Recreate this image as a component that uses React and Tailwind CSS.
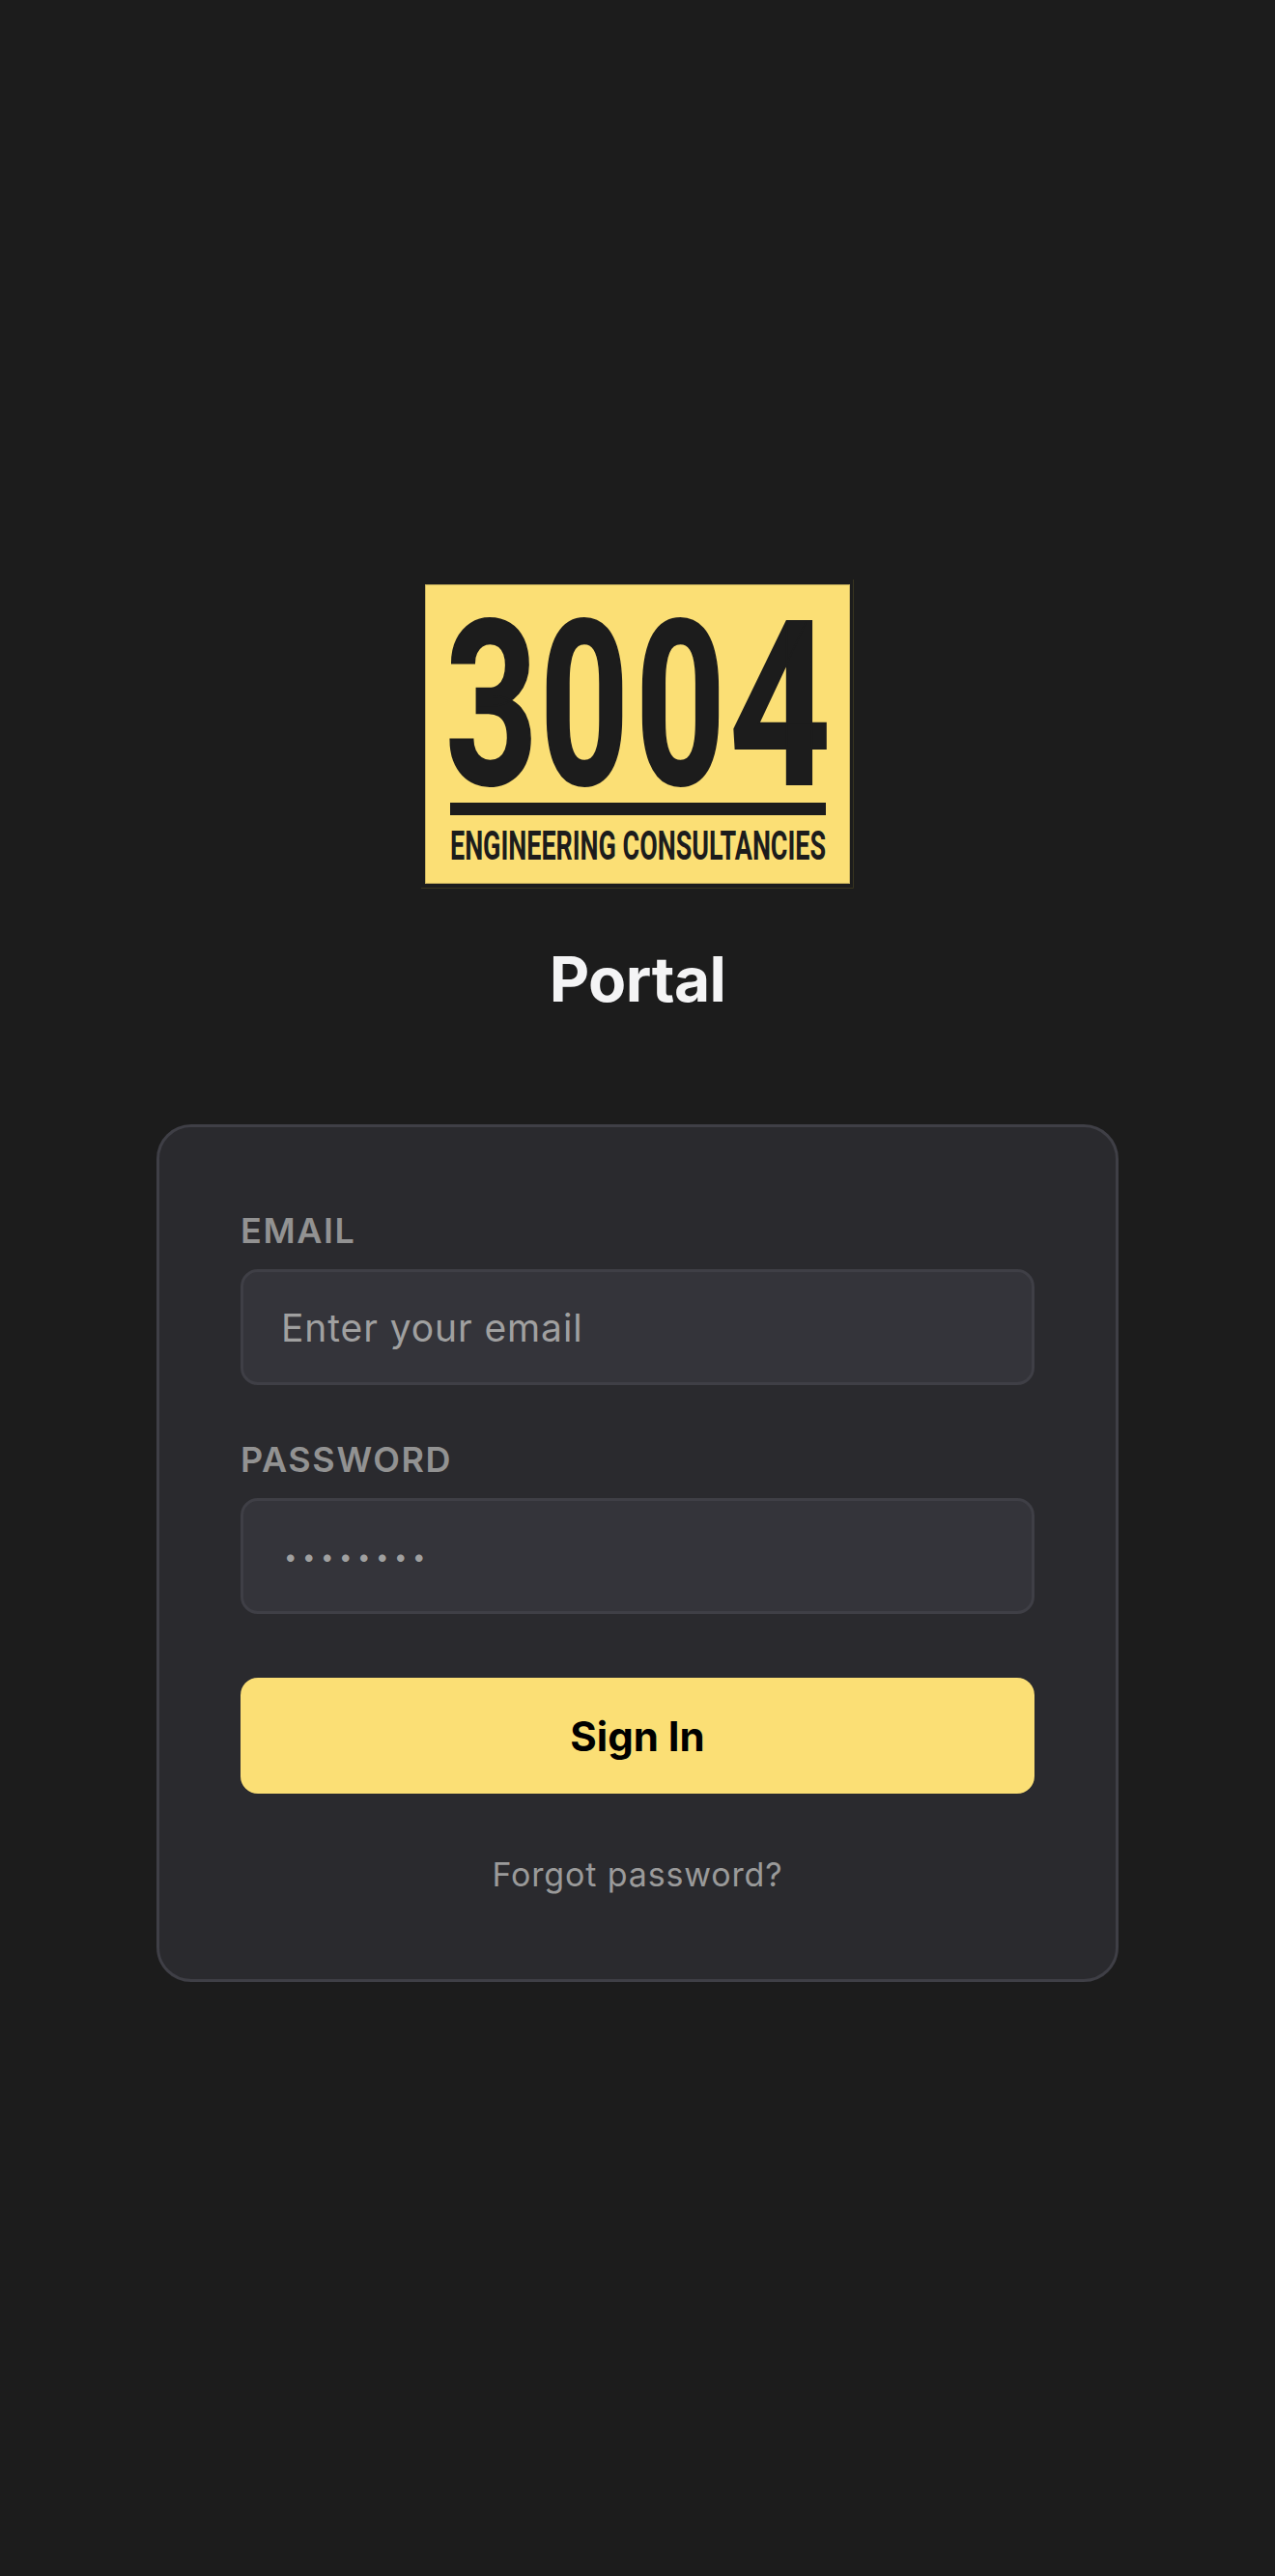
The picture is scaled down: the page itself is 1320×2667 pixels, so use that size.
const digits = [
  { ch: '3', x: 461, w: 96 },
  { ch: '0', x: 559, w: 92 },
  { ch: '0', x: 658, w: 93 },
  { ch: '4', x: 755, w: 105 },
];

const logoFont = "'Liberation Sans Narrow', Roboto, sans-serif";

const Logo = () => (
  <svg width="448" height="320" viewBox="436 600 448 320" className="block">
    <path d="M883.5 600V919.5H436" fill="none" stroke="#37341f" />
    <rect x="440.5" y="605.5" width="439" height="309" fill="#fbdf75" stroke="#c9b35f" />
    {digits.map((d, i) => (
      <text key={i} x={d.x} y="812" textLength={d.w} lengthAdjust="spacingAndGlyphs" fontFamily={logoFont} fontWeight="700" fontSize="238" fill="#1c1c1c" stroke="#1c1c1c" strokeWidth="2">
        {d.ch}
      </text>
    ))}
    <rect x="466" y="831" width="389" height="13" fill="#1c1c1c" />
    <text x="466" y="890" textLength="389" lengthAdjust="spacingAndGlyphs" fontFamily={logoFont} fontWeight="700" fontSize="42" fill="#1c1c1c">
      ENGINEERING CONSULTANCIES
    </text>
  </svg>
);

const Field = ({ label, type, placeholder, dots }) => (
  <div>
    <label className="block text-[36px] leading-[44px] font-semibold tracking-[1.6px] text-[#929292] mb-[18px]">{label}</label>
    <input
      type={type}
      placeholder={placeholder}
      className={`block w-full h-[120px] bg-[#34343a] border-[3px] border-[#3f3f46] rounded-[18px] outline-none placeholder:text-[#a0a0a0] ${dots ? 'px-[42px] text-[24px] tracking-[5.5px]' : 'px-[39px] text-[39px] tracking-[0.9px]'}`}
    />
  </div>
);

export default function App() {
  return (
    <div className="min-h-screen bg-[#1c1c1c] pt-[600px] flex flex-col items-center font-['Inter',sans-serif]">
      <Logo />
      <h1 className="mt-[58px] text-[64px] leading-[72px] tracking-[-0.5px] font-bold text-[#f4f4f5]">Portal</h1>
      <div className="mt-[114px] w-[996px] h-[888px] bg-[#2a2a2e] border-[3px] border-[#3f3f46] rounded-[36px] px-[84px] pt-[85px]">
        <Field label="EMAIL" type="email" placeholder="Enter your email" />
        <div className="mt-[55px]">
          <Field label="PASSWORD" type="password" placeholder="••••••••" dots />
        </div>
        <button className="mt-[66px] w-full h-[120px] bg-[#fbdf75] rounded-[18px] text-[42px] font-bold text-black">Sign In</button>
        <p className="mt-[60px] text-center text-[34px] leading-[48px] tracking-[0.85px] text-[#9a9a9a]">Forgot password?</p>
      </div>
    </div>
  );
}
